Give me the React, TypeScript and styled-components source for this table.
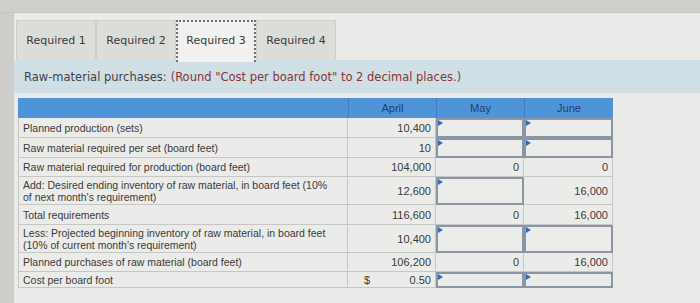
import { createGlobalStyle, styled } from "styled-components";

const GlobalStyle = createGlobalStyle`
    body {
        margin: 0;
        background: #d3d3cf;
    }
`;

const Page = styled.div`
    width: 700px;
    height: 303px;
    overflow: hidden;
    display: flex;
    flex-direction: column;
    background: #d0d0cc;
`;

const TopBand = styled.div`
    height: 12px;
    background: #cfcfcb;
    border-bottom: 1px solid #c4c4c0;
`;

const Screen = styled.div`
    flex: 1;
    background: #eaeae8;
    border-left: 14px solid #cdcdc9;
    display: flex;
    flex-direction: column;
    padding-top: 7px;
`;

const Tabs = styled.div`
    display: flex;
    align-items: flex-start;
    margin-left: 2px;
    height: 40px;
`;

const Tab = styled.div<{ $active?: boolean }>`
    width: 80px;
    display: flex;
    justify-content: center;
    font-family: "DejaVu Sans", Verdana, sans-serif;
    font-size: 11px;
    line-height: 14px;
    color: #3b3b3b;
    background: ${(p) => (p.$active ? "#f1f1ef" : "#dcdcd8")};
    border: ${(p) => (p.$active ? "2px dotted #6d6d6d" : "1px solid #cfcfcb")};
    border-bottom: none;
    box-sizing: border-box;
    height: ${(p) => (p.$active ? "42px" : "40px")};
    padding-top: ${(p) => (p.$active ? "12px" : "13px")};
    position: relative;
    z-index: ${(p) => (p.$active ? 1 : 0)};
`;

const Instruction = styled.div`
    height: 33px;
    background: #d0dfe5;
    display: flex;
    align-items: center;
    padding-left: 10px;
    font-family: "DejaVu Sans", Verdana, sans-serif;
    font-size: 11.5px;
    color: #3d4448;
`;

const Note = styled.span`
    color: #8a3434;
    margin-left: 4px;
`;

const Table = styled.div`
    margin: 5px 0 0 4px;
    width: 595px;
    display: grid;
    grid-template-columns: 330px 88px 88px 89px;
    font-family: "Liberation Sans", Arial, sans-serif;
    font-size: 10.5px;
    color: #3a3a3a;
`;

const Head = styled.div<{ $first?: boolean }>`
    height: 20px;
    background: #4f93d8;
    color: #1d416b;
    font-size: 11px;
    display: flex;
    align-items: center;
    justify-content: center;
    border-left: ${(p) => (p.$first ? "none" : "1px solid #3f7fc0")};
`;

const Label = styled.div<{ $h: number }>`
    height: ${(p) => p.$h}px;
    box-sizing: border-box;
    border: 1px solid #c6c6c4;
    border-top: none;
    display: flex;
    align-items: center;
    padding: 0 14px 0 4px;
    line-height: 12px;
    background: #ebebe9;
`;

const Value = styled.div<{ $h: number }>`
    height: ${(p) => p.$h}px;
    box-sizing: border-box;
    border-bottom: 1px solid #c6c6c4;
    border-right: 1px solid #c6c6c4;
    display: flex;
    align-items: center;
    justify-content: space-between;
    padding: 0 4px 0 16px;
    font-size: 11px;
    background: #ebebe9;
`;

const Amount = styled.span`
    margin-left: auto;
`;

const Input = styled.div<{ $h: number }>`
    height: ${(p) => p.$h}px;
    box-sizing: border-box;
    border: 2px solid #8a95a6;
    background: #ececea;
    position: relative;

    &::before {
        content: "";
        position: absolute;
        left: 0;
        top: 0;
        border-top: 3px solid transparent;
        border-bottom: 3px solid transparent;
        border-left: 5px solid #2f6fb8;
    }
`;

type Cell = string | null;

const rows: { label: string; h: number; april: string; dollar?: boolean; may: Cell; june: Cell }[] = [
    { label: "Planned production (sets)", h: 20, april: "10,400", may: null, june: null },
    { label: "Raw material required per set (board feet)", h: 20, april: "10", may: null, june: null },
    { label: "Raw material required for production (board feet)", h: 19, april: "104,000", may: "0", june: "0" },
    {
        label: "Add: Desired ending inventory of raw material, in board feet (10% of next month's requirement)",
        h: 28,
        april: "12,600",
        may: null,
        june: "16,000",
    },
    { label: "Total requirements", h: 20, april: "116,600", may: "0", june: "16,000" },
    {
        label: "Less: Projected beginning inventory of raw material, in board feet (10% of current month's requirement)",
        h: 28,
        april: "10,400",
        may: null,
        june: null,
    },
    { label: "Planned purchases of raw material (board feet)", h: 19, april: "106,200", may: "0", june: "16,000" },
    { label: "Cost per board foot", h: 16, april: "0.50", dollar: true, may: null, june: null },
];

function renderCell(v: Cell, h: number) {
    if (v === null) return <Input $h={h} />;
    return (
        <Value $h={h}>
            <Amount>{v}</Amount>
        </Value>
    );
}

export default function App() {
    return (
        <Page>
            <GlobalStyle />
            <TopBand />
            <Screen>
                <Tabs>
                    <Tab>Required 1</Tab>
                    <Tab>Required 2</Tab>
                    <Tab $active>Required 3</Tab>
                    <Tab>Required 4</Tab>
                </Tabs>
                <Instruction>
                    Raw-material purchases:
                    <Note>(Round "Cost per board foot" to 2 decimal places.)</Note>
                </Instruction>
                <Table>
                    <Head $first />
                    <Head>April</Head>
                    <Head>May</Head>
                    <Head>June</Head>
                    {rows.map((r) => (
                        <>
                            <Label $h={r.h}>{r.label}</Label>
                            <Value $h={r.h}>
                                {r.dollar ? <span>$</span> : null}
                                <Amount>{r.april}</Amount>
                            </Value>
                            {renderCell(r.may, r.h)}
                            {renderCell(r.june, r.h)}
                        </>
                    ))}
                </Table>
            </Screen>
        </Page>
    );
}
